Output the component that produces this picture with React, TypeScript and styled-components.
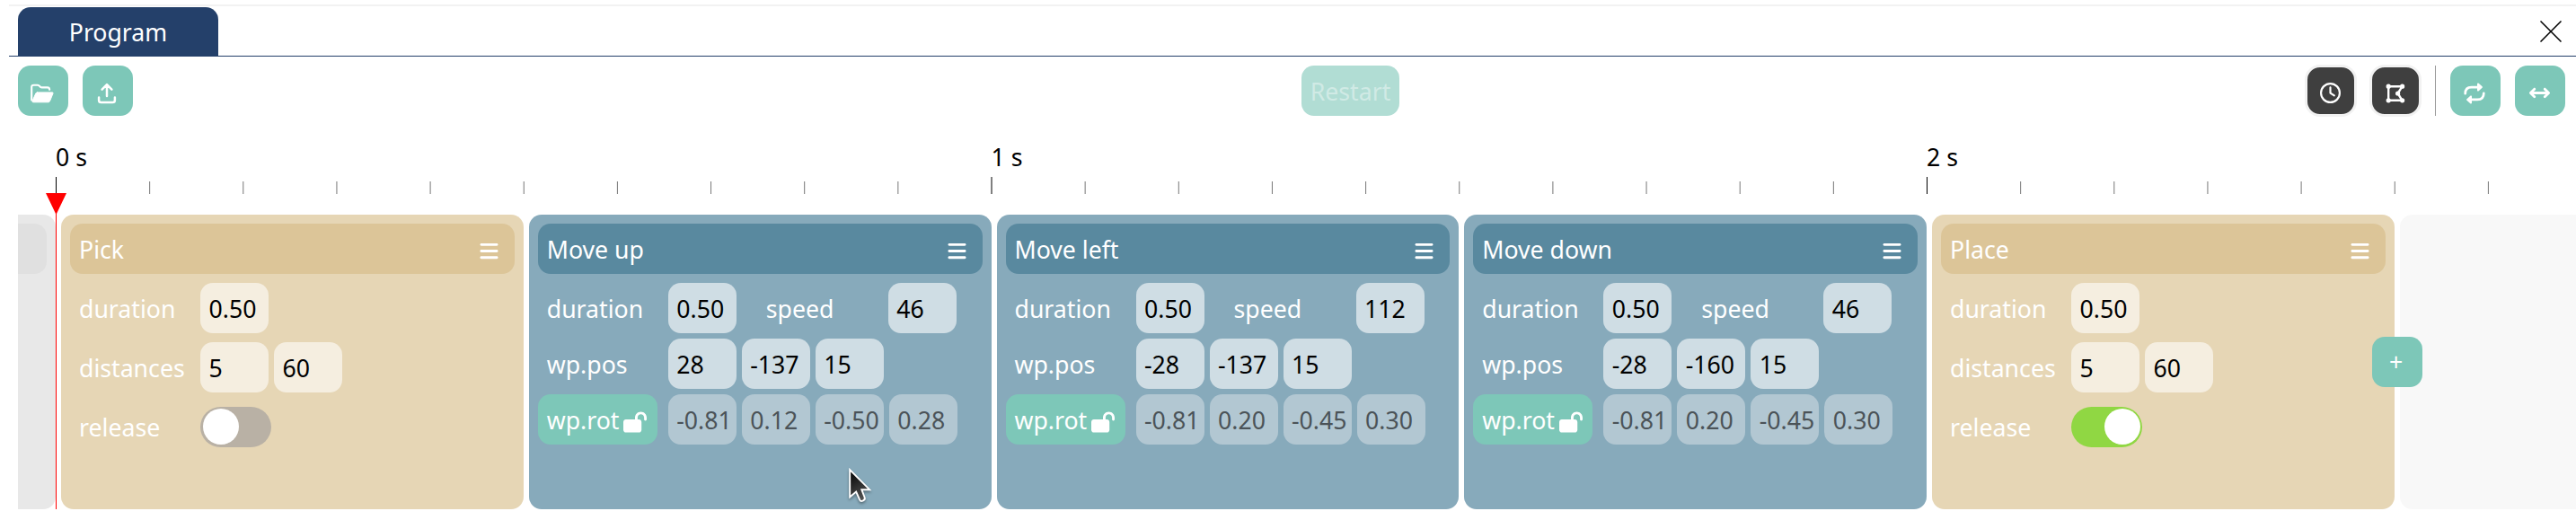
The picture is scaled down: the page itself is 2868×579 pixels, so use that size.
import React from 'react';
import styled, { createGlobalStyle, css } from 'styled-components';
import { FaArrowsLeftRight, FaBars, FaLockOpen, FaRegClock } from 'react-icons/fa6';

const colors = {
  navy: '#24406a',
  mint: '#7dc7b8',
  dark: '#3f3f3f',
  line: '#f2f2f2',
};

const tones = {
  sand: { body: '#e6d6b5', head: '#dcc598', field: '#f5eee0' },
  steel: { body: '#87aabb', head: '#59899f', field: '#cfdde4' },
};
type Tone = keyof typeof tones;

const GlobalStyle = createGlobalStyle`
  * { box-sizing: border-box; }
  body {
    margin: 0;
    background: #fff;
    color: #000;
    font: 26.667px/37px 'Noto Sans', sans-serif;
    overflow: hidden;
  }
`;

const Panel = styled.main`
  width: 2868px;
  height: 579px;
  padding-top: 5px;
  overflow: hidden;
`;

const TabBar = styled.nav`
  display: flex;
  align-items: flex-end;
  justify-content: space-between;
  height: 58px;
  margin-left: 10px;
  padding: 0 16px 0 10px;
  border-top: 2px solid ${colors.line};
  border-bottom: 1px solid ${colors.navy};
`;

const Tab = styled.div`
  width: 223px;
  height: 54px;
  padding-top: 10px;
  border-radius: 14px 14px 0 0;
  background: ${colors.navy};
  color: #fff;
  text-align: center;
`;

const CloseIcon = styled.svg`
  display: block;
  width: 24px;
  height: 24px;
  margin-bottom: 15px;
`;

const Toolbar = styled.div`
  display: grid;
  grid-template-columns: 1429px 109px 1fr;
  align-items: center;
  height: 76px;
  padding: 0 13px 0 20px;
`;

const Group = styled.div<{ $end?: boolean }>`
  display: flex;
  align-items: center;
  gap: 16px;
  ${(p) => p.$end && css`justify-content: flex-end;`}
`;

const IconButton = styled.button<{ $dark?: boolean }>`
  display: grid;
  place-items: center;
  width: 56px;
  height: 56px;
  padding: 5px 2px 0 0;
  border: 0;
  border-radius: 14px;
  background: ${colors.mint};
  color: #fff;
  ${(p) =>
    p.$dark &&
    css`
      width: 58px;
      height: 58px;
      margin-right: -2px;
      border: 3px solid ${colors.line};
      border-radius: 17px;
      background: ${colors.dark};
      padding: 5px 1px 0 0;
      & + & { margin-right: -1px; }
    `}
`;

const Divider = styled.i`
  width: 1px;
  height: 56px;
  background: #999;
`;

const RestartButton = styled.button`
  height: 56px;
  padding: 2px 0 0;
  border: 0;
  border-radius: 14px;
  background: #b1ddd4;
  color: #d0eae5;
  font: inherit;
`;

const Ruler = styled.svg`
  display: block;
  width: 2868px;
  height: 100px;
`;

const Track = styled.div`
  position: relative;
  display: flex;
  gap: 6px;
  height: 328px;
  margin-left: 20px;
`;

const Previous = styled.div`
  flex: none;
  width: 42px;
  padding: 10px 10px 0 0;
  border-radius: 0 14px 14px 0;
  background: #e8e8e8;
  &::before {
    content: '';
    display: block;
    height: 56px;
    border-radius: 0 14px 14px 0;
    background: #e0e0e0;
  }
`;

const Card = styled.section<{ $tone: Tone }>`
  flex: none;
  width: 514.75px;
  padding: 10px;
  border-radius: 14px;
  background: ${(p) => tones[p.$tone].body};
  color: #fff;
`;

const CardHead = styled.header<{ $tone: Tone }>`
  display: flex;
  align-items: center;
  justify-content: space-between;
  height: 56px;
  margin-bottom: 10px;
  padding: 3px 17px 0 10px;
  border-radius: 14px;
  background: ${(p) => tones[p.$tone].head};
  svg { margin-top: 2px; }
`;

const Row = styled.div<{ $gap: number }>`
  display: flex;
  align-items: center;
  gap: 6px;
  height: 56px;
  margin-bottom: ${(p) => p.$gap}px;
`;

const Label = styled.span<{ $width: number }>`
  flex: none;
  width: ${(p) => p.$width}px;
  margin-right: -6px;
  padding: 3px 0 0 10px;
`;

const SpeedLabel = styled(Label)`
  margin-left: 17px;
`;

const LockLabel = styled.button`
  display: flex;
  align-items: center;
  gap: 5px;
  flex: none;
  width: 133px;
  height: 56px;
  margin-right: 6px;
  padding: 3px 0 0 10px;
  border: 0;
  border-radius: 14px;
  background: ${colors.mint};
  color: #fff;
  font: inherit;
  svg { flex: none; margin-top: 2px; }
`;

const Field = styled.div<{ $tone: Tone; $muted?: boolean }>`
  flex: none;
  width: 76px;
  height: 56px;
  padding: 11px 0 0 9.5px;
  border-radius: 14px;
  background: ${(p) => (p.$muted ? '#b2c7d2' : tones[p.$tone].field)};
  color: ${(p) => (p.$muted ? '#4b5358' : '#000')};
  white-space: nowrap;
`;

const Switch = styled.div<{ $on?: boolean }>`
  display: flex;
  justify-content: ${(p) => (p.$on ? 'flex-end' : 'flex-start')};
  width: 79px;
  height: 45px;
  padding: 2.5px;
  border-radius: 23px;
  background: ${(p) => (p.$on ? '#90d743' : '#b9b1a5')};
  &::before {
    content: '';
    width: 40px;
    height: 40px;
    border-radius: 50%;
    background: #fff;
  }
`;

const Upcoming = styled.div`
  flex: 1;
  border-radius: 14px 0 0 14px;
  background: #f8f8f8;
`;

const AddButton = styled.button`
  position: absolute;
  left: 2621px;
  top: 136px;
  width: 56px;
  height: 56px;
  padding: 1px 3px 0 0;
  border: 0;
  border-radius: 14px;
  background: ${colors.mint};
  color: #fff;
  font: inherit;
`;

const Playhead = styled.svg`
  position: absolute;
  left: 31px;
  top: -24px;
  width: 24px;
  height: 352px;
`;

const Pointer = styled.svg`
  position: absolute;
  left: 921px;
  top: 280px;
  width: 36px;
  height: 44px;
  filter: drop-shadow(0 2px 1.5px rgba(0, 0, 0, 0.35));
`;

const Glyph = styled.svg`
  width: 26px;
  height: 24px;
  fill: none;
  stroke: currentColor;
  stroke-linecap: round;
  stroke-linejoin: round;
`;

const FolderIcon = () => (
  <Glyph viewBox="0 0 26 24" strokeWidth="2.1">
    <path d="M1.2 19.5V5q0-2.3 2.3-2.3h4.2q1 0 1.6.6l1.8 1.6q.6.5 1.5.5h6.2q2.2 0 2.4 2.4" />
    <path
      d="M7.6 10.9H24.2q1.2 0 .8 1.1L21.5 20.6q-.5 1.2-1.7 1.2H3.2q-1.8 0-1.1-1.5L5.8 12q.5-1.1 1.8-1.1z"
      fill="currentColor"
      strokeWidth="1"
    />
  </Glyph>
);

const UploadIcon = () => (
  <Glyph viewBox="-1 0 26 24" strokeWidth="2.5">
    <path d="M12 15V2.2M6.6 7.6 12 2.2l5.4 5.4M3.1 16.4v3.1q0 2.6 2.6 2.6h12.6q2.6 0 2.6-2.6v-3.1" />
  </Glyph>
);

const PolygonIcon = () => (
  <Glyph viewBox="-1 0 26 24" strokeWidth="2.4">
    <path d="M4.2 4.2H19.6L14.6 12l5 7.8H4.2z" />
    <path d="M4.2 4.2h.01M19.6 4.2h.01M14.6 12h.01M19.6 19.8h.01M4.2 19.8h.01" strokeWidth="5.2" />
  </Glyph>
);

const RepeatIcon = () => (
  <Glyph viewBox="-1 0 26 24">
    {[0, 180].map((turn) => (
      <g key={turn} transform={`rotate(${turn} 12 12)`}>
        <path d="M1.7 12.2Q1.7 5.1 8.6 5.1H16" strokeWidth="2.7" />
        <path d="M16 1.5 19.9 5 16 8.6z" fill="currentColor" strokeWidth="2" />
      </g>
    ))}
  </Glyph>
);

function GripCard({ title, on }: { title: string; on?: boolean }) {
  return (
    <Card $tone="sand">
      <CardHead $tone="sand">{title}<FaBars size={23} /></CardHead>
      <Row $gap={10}>
        <Label $width={145}>duration</Label>
        <Field $tone="sand">0.50</Field>
      </Row>
      <Row $gap={10}>
        <Label $width={145}>distances</Label>
        <Field $tone="sand">5</Field>
        <Field $tone="sand">60</Field>
      </Row>
      <Row $gap={0}>
        <Label $width={145}>release</Label>
        <Switch $on={on} />
      </Row>
    </Card>
  );
}

interface MoveProps {
  title: string;
  speed: string;
  pos: string[];
  rot: string[];
}

function MoveCard({ title, speed, pos, rot }: MoveProps) {
  return (
    <Card $tone="steel">
      <CardHead $tone="steel">{title}<FaBars size={23} /></CardHead>
      <Row $gap={6}>
        <Label $width={145}>duration</Label>
        <Field $tone="steel">0.50</Field>
        <SpeedLabel $width={146}>speed</SpeedLabel>
        <Field $tone="steel">{speed}</Field>
      </Row>
      <Row $gap={6}>
        <Label $width={145}>wp.pos</Label>
        {pos.map((v, i) => <Field key={i} $tone="steel">{v}</Field>)}
      </Row>
      <Row $gap={0}>
        <LockLabel>wp.rot<FaLockOpen size={26} /></LockLabel>
        {rot.map((v, i) => <Field key={i} $tone="steel" $muted>{v}</Field>)}
      </Row>
    </Card>
  );
}

const ticks = Array.from({ length: 27 }, (_, i) => i);

export default function App() {
  return (
    <Panel>
      <GlobalStyle />
      <TabBar>
        <Tab>Program</Tab>
        <CloseIcon viewBox="0 0 24 24" stroke="#000" strokeWidth="1.5">
          <path d="M0.5 0.5 23.5 23.5M23.5 0.5 0.5 23.5" />
        </CloseIcon>
      </TabBar>
      <Toolbar>
        <Group>
          <IconButton><FolderIcon /></IconButton>
          <IconButton><UploadIcon /></IconButton>
        </Group>
        <RestartButton>Restart</RestartButton>
        <Group $end>
          <IconButton $dark><FaRegClock size={23} /></IconButton>
          <IconButton $dark><PolygonIcon /></IconButton>
          <Divider />
          <IconButton><RepeatIcon /></IconButton>
          <IconButton><FaArrowsLeftRight size={23} /></IconButton>
        </Group>
      </Toolbar>
      <Ruler viewBox="0 139 2868 100">
        {ticks.map((i) =>
          i % 10 === 0 ? (
            <g key={i}>
              <path d={`M${62.5 + i * 104.15} 197v19`} stroke="#000" />
              <text x={62 + i * 104.15} y="184.5">{i / 10} s</text>
            </g>
          ) : (
            <path key={i} d={`M${62.5 + i * 104.15} 202v14`} stroke="#777" />
          ),
        )}
      </Ruler>
      <Track>
        <Previous />
        <GripCard title="Pick" />
        <MoveCard title="Move up" speed="46" pos={['28', '-137', '15']} rot={['-0.81', '0.12', '-0.50', '0.28']} />
        <MoveCard title="Move left" speed="112" pos={['-28', '-137', '15']} rot={['-0.81', '0.20', '-0.45', '0.30']} />
        <MoveCard title="Move down" speed="46" pos={['-28', '-160', '15']} rot={['-0.81', '0.20', '-0.45', '0.30']} />
        <GripCard title="Place" on />
        <Upcoming />
        <AddButton>+</AddButton>
        <Playhead viewBox="0 0 24 352">
          <path d="M0 0h23L11.5 24z" fill="red" />
          <path d="M11.5 20v332" stroke="red" />
        </Playhead>
        <Pointer viewBox="0 0 36 44">
          <defs>
            <linearGradient id="pointer" x1="0" y1="0" x2="0.4" y2="1">
              <stop offset="0" stopColor="#000" />
              <stop offset="1" stopColor="#505050" />
            </linearGradient>
          </defs>
          <path
            d="M5.2 4V34.5L12.2 28.5 16.2 37.6Q17.2 39.6 19.6 38.6 22.6 37.2 21.7 35L18.3 26.2H27.2z"
            fill="url(#pointer)"
            stroke="#fff"
            strokeWidth="1.9"
          />
        </Pointer>
      </Track>
    </Panel>
  );
}
